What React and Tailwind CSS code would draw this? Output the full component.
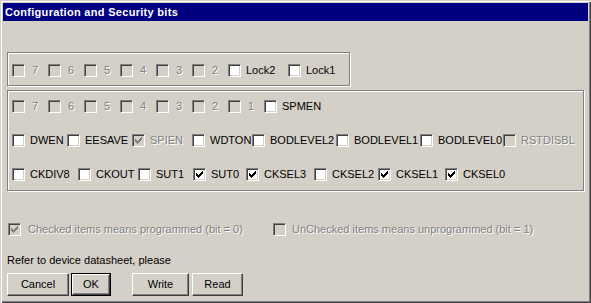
import React from 'react';

const font = "font-['Liberation_Sans',Arial,sans-serif] text-[11px] leading-[13px]";
const dimText = "text-[#808080] [text-shadow:1px_1px_0_#ffffff]";

function Check({ color }) {
	return (
		<svg width="7" height="7" viewBox="0 0 7 7" shapeRendering="crispEdges">
			<path
				fill={color}
				d="M6 0h1v1h-1z M5 1h2v1h-2z M0 2h1v1h-1z M4 2h3v1h-3z M0 3h2v1h-2z M3 3h3v1h-3z M0 4h5v1h-5z M1 5h3v1h-3z M2 6h1v1h-1z"
			/>
		</svg>
	);
}

function Box({ checked, disabled }) {
	return (
		<div
			className={`w-[13px] h-[13px] shrink-0 flex items-center justify-center border border-t-[#808080] border-l-[#808080] border-b-white border-r-white shadow-[inset_1px_1px_0_#404040,inset_-1px_-1px_0_#d4d0c8] ${
				disabled ? 'bg-[#d4d0c8]' : 'bg-white'
			}`}
		>
			{checked ? <Check color={disabled ? '#808080' : '#000000'} /> : null}
		</div>
	);
}

function Cb({ label, w, checked, disabled, gap = 'ml-[5px]' }) {
	return (
		<div className={`flex items-center overflow-hidden shrink-0 ${w}`}>
			<Box checked={checked} disabled={disabled} />
			<span className={`${gap} whitespace-nowrap ${disabled ? dimText : 'text-black'}`}>{label}</span>
		</div>
	);
}

function Group({ className, children }) {
	return (
		<div className={`border border-[#808080] shadow-[1px_1px_0_#ffffff,inset_1px_1px_0_#ffffff] ${className}`}>
			{children}
		</div>
	);
}

function Btn({ children, w, isDefault }) {
	const inner = (
		<div className="h-full w-full flex items-center justify-center border border-t-white border-l-white border-b-[#404040] border-r-[#404040] shadow-[inset_-1px_-1px_0_#808080]">
			{children}
		</div>
	);
	if (isDefault) {
		return <div className={`h-[23px] border border-black ${w}`}>{inner}</div>;
	}
	return <div className={`h-[23px] ${w}`}>{inner}</div>;
}

const bits = ['7', '6', '5', '4', '3', '2'];

export default function App() {
	return (
		<div
			className={`w-[591px] h-[303px] bg-[#d4d0c8] p-[3px] flex flex-col ${font} shadow-[inset_1px_1px_0_#d4d0c8,inset_2px_2px_0_#ffffff,inset_-1px_-1px_0_#404040,inset_-2px_-2px_0_#808080]`}
		>
			<div className="h-[18px] bg-[#000080] text-white font-bold tracking-[0.3px] flex items-center pl-[2px] shrink-0">
				Configuration and Security bits
			</div>

			<div className="flex flex-col pl-[4px] pr-[4px]">
				{/* lock bits */}
				<Group className="mt-[31px] w-[343px] h-[34px] pt-[11px] pl-[4px] flex items-start">
					{bits.map((b) => (
						<Cb key={b} label={b} w="w-[36px]" disabled gap="ml-[7px]" />
					))}
					<Cb label="Lock2" w="w-[60px]" />
					<Cb label="Lock1" w="w-[50px]" />
				</Group>

				{/* fuse bits */}
				<Group className="mt-[4px] w-[577px] h-[101px] pt-[9px] pl-[4px] flex flex-col gap-y-[21px]">
					<div className="flex">
						{bits.map((b) => (
							<Cb key={b} label={b} w="w-[36px]" disabled gap="ml-[7px]" />
						))}
						<Cb label="1" w="w-[36px]" disabled gap="ml-[7px]" />
						<Cb label="SPMEN" w="w-[80px]" />
					</div>
					<div className="flex">
						<Cb label="DWEN" w="w-[55px]" />
						<Cb label="EESAVE" w="w-[65px]" />
						<Cb label="SPIEN" w="w-[60px]" checked disabled />
						<Cb label="WDTON" w="w-[59px]" />
						<div className="w-[1px] shrink-0" />
						<Cb label="BODLEVEL2" w="w-[84px]" />
						<Cb label="BODLEVEL1" w="w-[84px]" />
						<Cb label="BODLEVEL0" w="w-[83px]" />
						<Cb label="RSTDISBL" w="w-[72px]" disabled />
					</div>
					<div className="flex">
						<Cb label="CKDIV8" w="w-[66px]" />
						<Cb label="CKOUT" w="w-[60px]" />
						<Cb label="SUT1" w="w-[55px]" />
						<Cb label="SUT0" w="w-[53px]" checked />
						<Cb label="CKSEL3" w="w-[68px]" checked />
						<Cb label="CKSEL2" w="w-[64px]" />
						<Cb label="CKSEL1" w="w-[67px]" checked />
						<Cb label="CKSEL0" w="w-[70px]" checked />
					</div>
				</Group>

				{/* legend */}
				<div className="mt-[32px] flex pl-[1px]">
					<Cb label="Checked items means programmed (bit = 0)" w="w-[265px]" checked disabled gap="ml-[7px]" />
					<Cb label="UnChecked items means unprogrammed (bit = 1)" w="w-[290px]" disabled gap="ml-[6px]" />
				</div>

				<div className="mt-[18px] text-black">Refer to device datasheet, please</div>

				<div className="mt-[6px] flex">
					<Btn w="w-[62px]">Cancel</Btn>
					<div className="ml-[2px]">
						<Btn w="w-[40px]" isDefault>OK</Btn>
					</div>
					<div className="ml-[21px]">
						<Btn w="w-[57px]">Write</Btn>
					</div>
					<div className="ml-[3px]">
						<Btn w="w-[51px]">Read</Btn>
					</div>
				</div>
			</div>
		</div>
	);
}
